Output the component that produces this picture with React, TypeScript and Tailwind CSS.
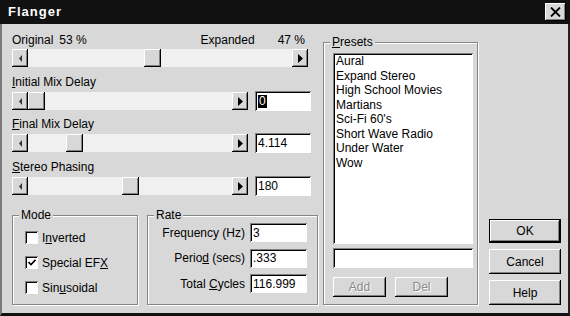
import React from 'react';

const raised = 'bg-[#d8d8d8] shadow-[inset_-1px_-1px_#000,inset_1px_1px_#fff,inset_-2px_-2px_#808080]';
const sunken = 'bg-white shadow-[inset_1px_1px_#808080,inset_-1px_-1px_#fff,inset_2px_2px_#000]';
const group = 'relative border border-[#868686] shadow-[inset_1px_1px_#fff,1px_1px_#fff]';

function LeftArrow() {
  return (
    <svg width="4" height="7" viewBox="0 0 4 7">
      <path d="M4 0 L1 3.5 L4 7 Z" fill="#333" />
    </svg>
  );
}

function RightArrow() {
  return (
    <svg width="5" height="9" viewBox="0 0 5 9">
      <path d="M0 0 L5 4.5 L0 9 Z" fill="#000" />
    </svg>
  );
}

function Slider({ width, offset }: { width: string; offset: number }) {
  return (
    <div className={`flex h-[18px] bg-[#f0f0f0] ${width}`}>
      <div className={`w-[16px] h-full flex items-center justify-center ${raised}`}>
        <LeftArrow />
      </div>
      <div className={`w-[17px] h-full ${raised}`} style={{ marginLeft: offset }} />
      <div className="flex-1" />
      <div className={`w-[16px] h-full flex items-center justify-center ${raised}`}>
        <RightArrow />
      </div>
    </div>
  );
}

function Field({ value, selected }: { value: string; selected?: boolean }) {
  return (
    <div className={`w-[56px] h-[20px] flex items-center pl-[3px] ${sunken}`}>
      {selected ? <span className="bg-black text-white leading-[13px] px-[1px]">{value}</span> : value}
    </div>
  );
}

function Check({ checked, children }: { checked?: boolean; children: React.ReactNode }) {
  return (
    <div className="h-[25px] flex items-center gap-[4px]">
      <div className={`w-[13px] h-[13px] flex items-center justify-center ${sunken}`}>
        {checked && (
          <svg width="8" height="7" viewBox="0 0 8 7">
            <path d="M0.5 3 L3 5.5 L7.5 0.8" stroke="#000" strokeWidth="1.6" fill="none" />
          </svg>
        )}
      </div>
      <span>{children}</span>
    </div>
  );
}

function RateRow({ label, value }: { label: React.ReactNode; value: string }) {
  return (
    <div className="h-[25.5px] flex items-center justify-end gap-[5px]">
      <span>{label}</span>
      <div className={`w-[57px] h-[19px] flex items-center pl-[3px] ${sunken}`}>{value}</div>
    </div>
  );
}

const presets = ['Aural', 'Expand Stereo', 'High School Movies', 'Martians', "Sci-Fi 60's", 'Short Wave Radio', 'Under Water', 'Wow'];

export default function App() {
  return (
    <div
      className="w-[570px] h-[316px] flex flex-col bg-[#d8d8d8] text-black text-[12px] leading-[14px] overflow-hidden"
      style={{ fontFamily: '"Liberation Sans", Arial, sans-serif' }}
    >
      <div className="h-[24px] bg-[#111] flex items-center justify-between pl-[8px] pr-[4px] shrink-0">
        <span className="text-white text-[13px] font-bold tracking-[1px]">Flanger</span>
        <div className={`w-[21px] h-[18px] flex items-center justify-center ${raised}`}>
          <svg width="11" height="10" viewBox="0 0 11 10">
            <path d="M1 0.5 L10 9.5 M10 0.5 L1 9.5" stroke="#000" strokeWidth="1.8" />
          </svg>
        </div>
      </div>

      <div className="flex-1 flex pl-[10px] border-l-2 border-r-2 border-b-[3px] border-l-[#7a7a7a] border-r-[#222] border-b-[#111]">
        <div className="w-[306px] flex flex-col">
          <div className="mt-[9px] w-[296px] flex justify-between pr-[3px]">
            <span>
              Original<span className="ml-[6px]">53 %</span>
            </span>
            <span>
              Expanded<span className="ml-[23px]">47 %</span>
            </span>
          </div>
          <div className="mt-[2px]">
            <Slider width="w-[296px]" offset={116} />
          </div>

          <div className="mt-[8px]">
            <u>I</u>nitial Mix Delay
          </div>
          <div className="mt-[2px] flex items-center gap-[7px] h-[20px]">
            <Slider width="w-[236px]" offset={0} />
            <Field value="0" selected />
          </div>

          <div className="mt-[6px]">
            <u>F</u>inal Mix Delay
          </div>
          <div className="mt-[2px] flex items-center gap-[7px] h-[20px]">
            <Slider width="w-[236px]" offset={38} />
            <Field value="4.114" />
          </div>

          <div className="mt-[7px]">
            <u>S</u>tereo Phasing
          </div>
          <div className="mt-[2px] flex items-center gap-[7px] h-[20px]">
            <Slider width="w-[236px]" offset={94} />
            <Field value="180" />
          </div>

          <div className="mt-[19px] flex gap-[9px]">
            <div className={`w-[126px] h-[90px] pt-[9px] pl-[12px] ${group}`}>
              <span className="absolute -top-[8px] left-[6px] px-[2px] bg-[#d8d8d8]">Mode</span>
              <Check>
                I<u>n</u>verted
              </Check>
              <Check checked>
                Special EF<u>X</u>
              </Check>
              <Check>
                Sin<u>u</u>soidal
              </Check>
            </div>
            <div className={`w-[171px] h-[90px] pt-[4px] pr-[10px] ${group}`}>
              <span className="absolute -top-[8px] left-[6px] px-[2px] bg-[#d8d8d8]">Rate</span>
              <RateRow label="Frequency (Hz)" value="3" />
              <RateRow
                label={
                  <>
                    Perio<u>d</u> (secs)
                  </>
                }
                value=".333"
              />
              <RateRow
                label={
                  <>
                    Total <u>C</u>ycles
                  </>
                }
                value="116.999"
              />
            </div>
          </div>
        </div>

        <div className={`ml-[5px] mt-[18px] w-[155px] h-[263px] pt-[10px] pl-[9px] ${group}`}>
          <span className="absolute -top-[8px] left-[6px] px-[2px] bg-[#d8d8d8]">
            <u>P</u>resets
          </span>
          <div className={`w-[140px] h-[191px] pt-[1px] pl-[3px] flex flex-col ${sunken}`}>
            {presets.map((p) => (
              <div key={p} className="leading-[14.5px]">
                {p}
              </div>
            ))}
          </div>
          <div className={`mt-[4px] w-[140px] h-[20px] ${sunken}`} />
          <div className="mt-[9px] flex gap-[9px]">
            <div className={`w-[53px] h-[20px] flex items-center justify-center text-[#8a8a8a] ${raised}`}>
              <span className="[text-shadow:1px_1px_#fff]">Add</span>
            </div>
            <div className={`w-[53px] h-[20px] flex items-center justify-center text-[#8a8a8a] ${raised}`}>
              <span className="[text-shadow:1px_1px_#fff]">Del</span>
            </div>
          </div>
        </div>

        <div className="ml-[11px] mt-[195px] w-[72px] flex flex-col gap-[6px]">
          <div className="h-[24px] border border-black">
            <div className={`h-full flex items-center justify-center ${raised}`}>OK</div>
          </div>
          <div className={`h-[25px] flex items-center justify-center ${raised}`}>Cancel</div>
          <div className={`h-[25px] flex items-center justify-center ${raised}`}>Help</div>
        </div>
      </div>
    </div>
  );
}
